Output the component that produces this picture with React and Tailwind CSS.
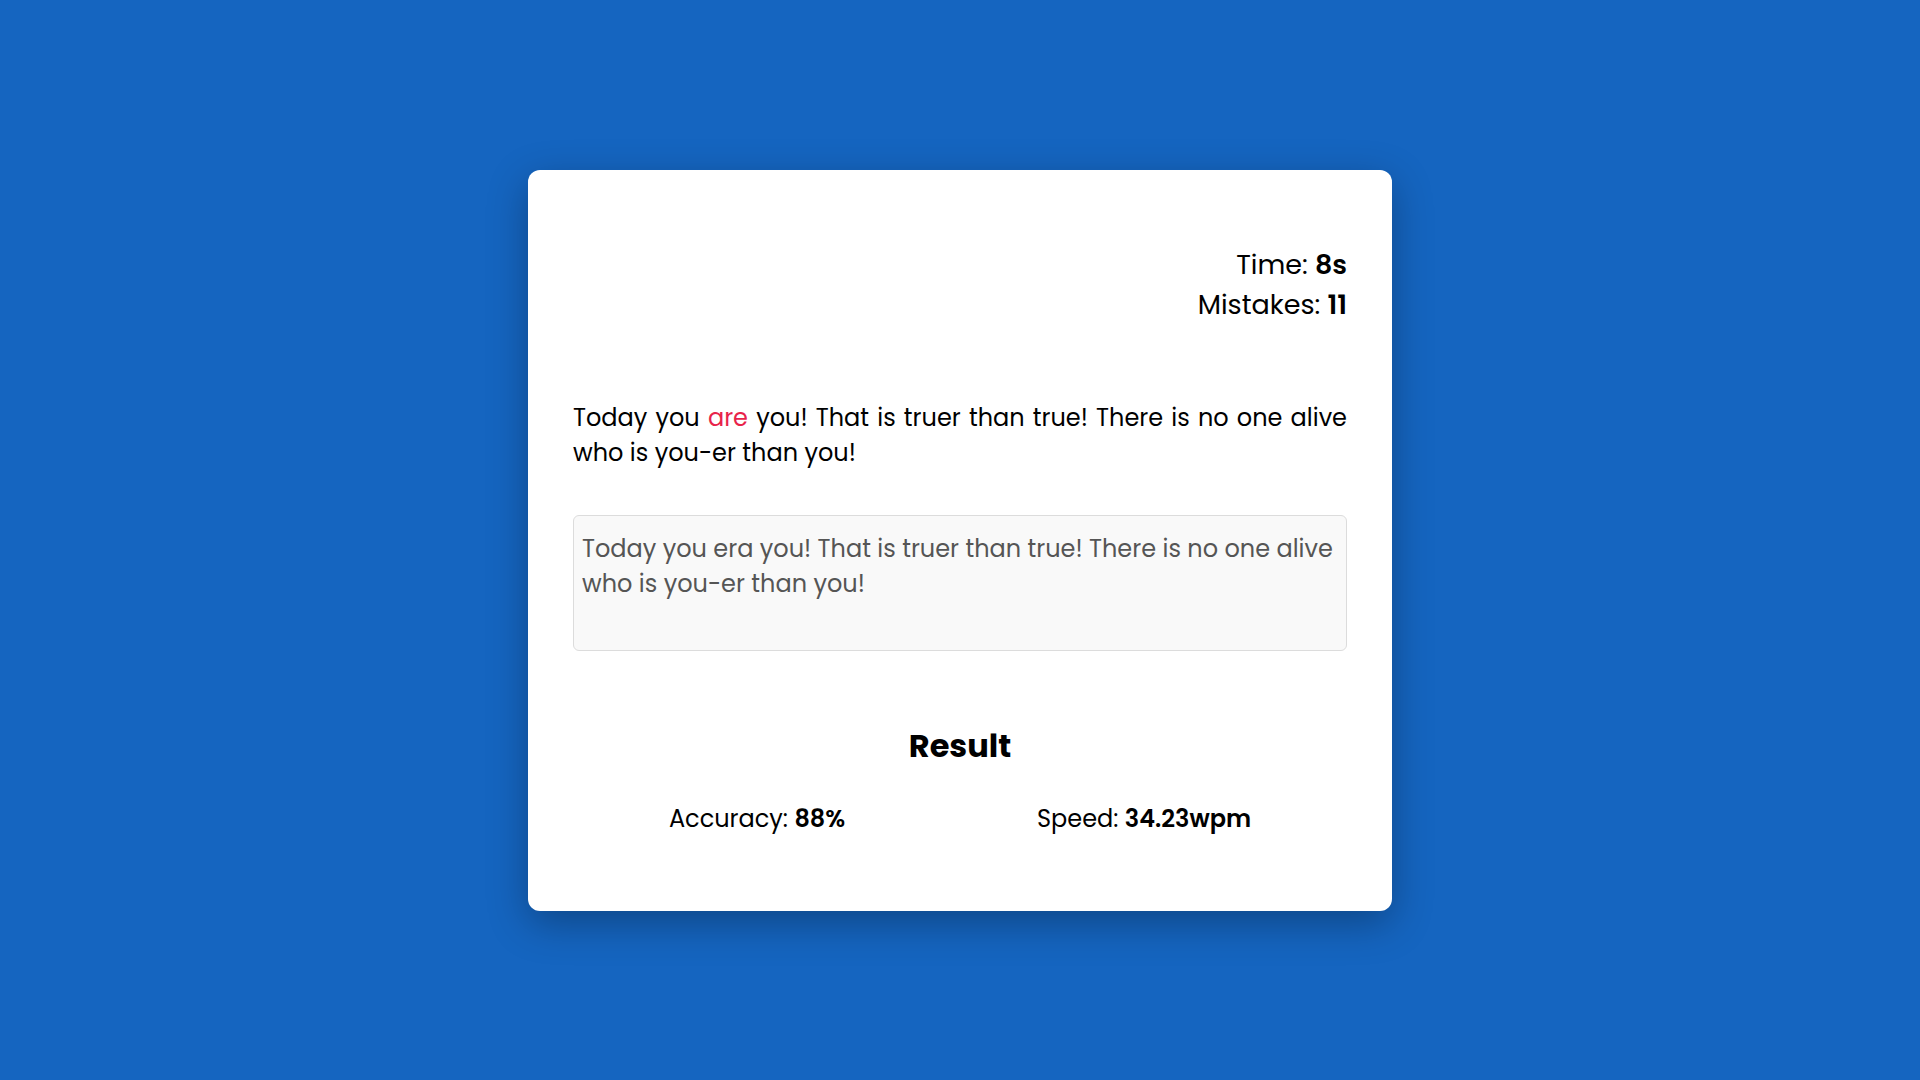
import React from 'react';

const FONT = "font-['Poppins','Noto_Sans',sans-serif]";

function Stat({ label, value }) {
  return (
    <p className="text-[24px] leading-[35px] text-black">
      {label}: <span className="font-semibold">{value}</span>
    </p>
  );
}

export default function App() {
  return (
    <div className={`min-h-screen w-full bg-[#1565c0] flex items-center justify-center ${FONT}`}>
      <div className="w-[864px] bg-white rounded-xl px-[45px] pt-[75px] pb-[75px] shadow-[0_12px_40px_rgba(0,0,0,0.3)]">
        <div className="text-right text-[27px] leading-[40px] text-black">
          <p>
            Time: <span className="font-semibold">8s</span>
          </p>
          <p>
            Mistakes: <span className="font-semibold">11</span>
          </p>
        </div>

        <p className="mt-[75px] text-justify text-[24px] leading-[35px] text-black">
          Today you <span className="text-[#e8234a]">are</span> you! That is truer than true! There is no one alive who is you-er than you!
        </p>

        <textarea
          readOnly
          defaultValue="Today you era you! That is truer than true! There is no one alive who is you-er than you!"
          className="mt-[45px] block w-full h-[136px] resize-none rounded-md border border-[#dcdcdc] bg-[#f9f9f9] px-[8px] pt-[15px] text-[24px] leading-[35px] text-[#555] outline-none"
        />

        <h2 className="mt-[71px] text-center text-[32px] leading-[48px] font-bold text-black">Result</h2>

        <div className="mt-[31px] flex justify-around">
          <Stat label="Accuracy" value="88%" />
          <Stat label="Speed" value="34.23wpm" />
        </div>
      </div>
    </div>
  );
}
